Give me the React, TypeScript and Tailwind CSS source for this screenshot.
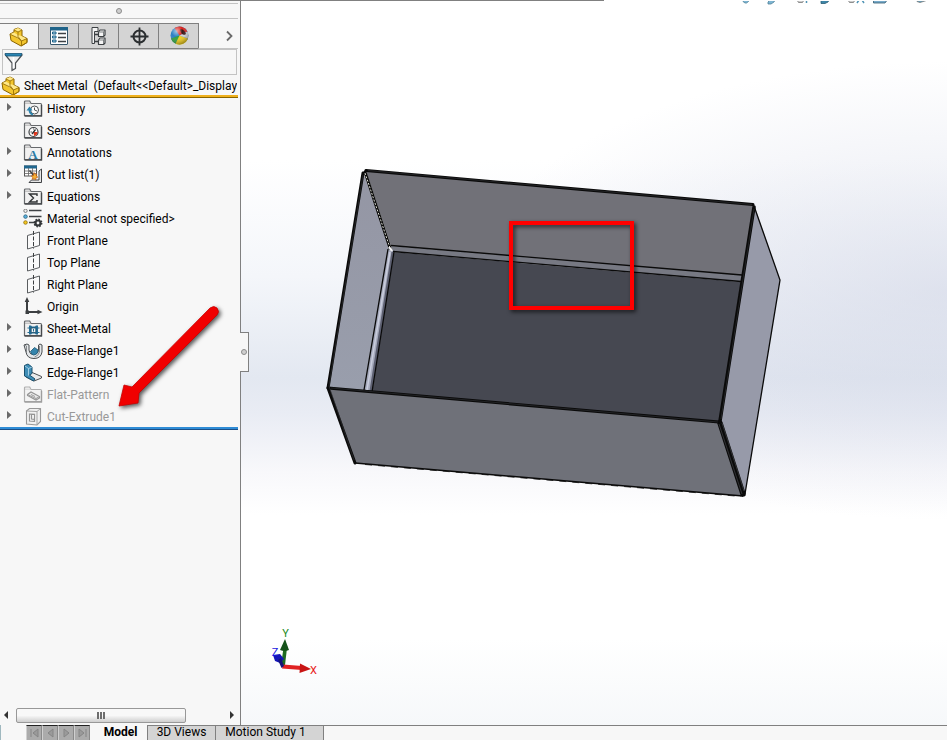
import type { ReactNode } from "react";

function Icon({ children, faded = false }: { children: ReactNode; faded?: boolean }) {
  return (
    <svg viewBox="0 0 20 20" className={faded ? "size-5 shrink-0 opacity-50 grayscale" : "size-5 shrink-0"} aria-hidden="true">
      {children}
    </svg>
  );
}

function Folder() {
  return (
    <>
      <path d="M1.500 16.500V3q0-1 1-1h4.200L8 4.500h9.500q1 0 1 1v11z" fill="#f1f1f1" stroke="#66696c" strokeWidth="1.200" />
      <path d="M2 4.200h5.500" stroke="#b0b0b0" />
      <path d="M1.500 17h17V6" fill="none" stroke="#45484b" strokeWidth="1.300" />
    </>
  );
}

function PartIcon() {
  return (
    <Icon>
      <path d="M1 7l4-2V2.500L9 1l4 2v6l5 2.500v4L12 19 2 13.500z" fill="#f3c62e" stroke="#8a6300" strokeWidth="1" strokeLinejoin="round" />
      <path d="M5 2.800L9 1l4 2-4 2zM1.500 7l3.500-1.500 4 2.500 3.500 1 5 2.500-5 2.500z" fill="#ffe88a" />
      <path d="M5 3l4 2v4.500l3.500 4.500V19L18 15.500v-4l-5.500 2.500M9 5l4-2M1.500 7.500L9 11l3.500 3" fill="none" stroke="#9b7206" strokeWidth=".9" />
    </Icon>
  );
}

function HistoryIcon() {
  return (
    <Icon>
      <Folder />
      <circle cx="11.500" cy="11" r="4" fill="#fff" stroke="#4c5053" />
      <path d="M11.500 8.500V11l2.500 1" fill="none" stroke="#4c5053" />
      <path d="M10 15.500A4.500 4.500 0 0 1 6.500 11" fill="none" stroke="#2a82ad" strokeWidth="1.800" />
      <path d="M3.500 11.500L6.500 7.500l3 4z" fill="#2a82ad" />
    </Icon>
  );
}

function SensorsIcon() {
  return (
    <Icon>
      <Folder />
      <circle cx="10.500" cy="11" r="4.500" fill="#fff" stroke="#3d4144" strokeWidth="1.200" />
      <path d="M10.500 11l4 0a4 4 0 0 1-3.500 4z" fill="#e0361c" />
      <path d="M9 13l3.500-4.500" stroke="#2b2f32" strokeWidth="1.300" />
      <path d="M7.500 11h1.500M10.500 7.500v1" stroke="#555" />
    </Icon>
  );
}

function AnnotationsIcon() {
  return (
    <Icon>
      <Folder />
      <text x="10" y="15.500" textAnchor="middle" fontFamily="Liberation Serif, serif" fontWeight="bold" fontSize="13" fill="#2a7ba6">A</text>
    </Icon>
  );
}

function EquationsIcon() {
  return (
    <Icon>
      <Folder />
      <path d="M14 9V7H6.500l4 4-4 4H14v-2" fill="none" stroke="#303335" strokeWidth="1.400" />
    </Icon>
  );
}

function CutListIcon() {
  return (
    <Icon>
      <rect x="1.500" y="1" width="12" height="10" fill="#fff" stroke="#555" />
      <rect x="1" y=".5" width="13" height="3" fill="#20678f" />
      <path d="M1.500 6h12M1.500 8.500h12M5.500 3v8M9.500 3v8" stroke="#666" strokeWidth=".8" />
      <path d="M6 17.500l2.500-2.500H16V6l2.500-2v13.500z" fill="#e6e6e6" stroke="#404346" />
      <path d="M6.500 5.500l6 7" stroke="#444" strokeWidth="1.500" />
      <path d="M11 7.500l.8 1.700 2-.2-.6 1.900 1.600 1.200-1.900.8-.1 2-1.700-1.200-1.900.6.5-1.900-1.300-1.600 2-.3z" fill="#f9b233" stroke="#c05a10" strokeWidth=".7" />
    </Icon>
  );
}

function MaterialIcon() {
  return (
    <Icon>
      <path d="M6 1.500h12.500M6 7.500h12.500M6 13.500h6" stroke="#3e4245" strokeWidth="1.500" />
      <circle cx="2.500" cy="1.800" r="1.700" fill="#eee" stroke="#666" strokeWidth=".8" />
      <circle cx="2.500" cy="7.600" r="1.800" fill="#56b0dd" stroke="#32637c" strokeWidth=".8" />
      <circle cx="2.500" cy="13.500" r="1.800" fill="#f3c51f" stroke="#8f7210" strokeWidth=".8" />
      <circle cx="15" cy="14" r="2.500" fill="none" stroke="#333639" strokeWidth="2.200" />
      <circle cx="15" cy="14" r="3.700" fill="none" stroke="#333639" strokeWidth="1.500" strokeDasharray="1.500 1.400" />
    </Icon>
  );
}

function PlaneIcon() {
  return (
    <Icon>
      <path d="M4.500 4.500L16.500 1v13.500L4.500 18z" fill="#fafafa" stroke="#5a5d60" />
      <path d="M10.500 0v17.500" stroke="#3d4042" strokeDasharray="4 1.500" />
    </Icon>
  );
}

function OriginIcon() {
  return (
    <Icon>
      <path d="M4 3v12h12" fill="none" stroke="#3c3f41" strokeWidth="2" />
      <path d="M4 0l2.300 5H1.700zM19.500 15l-5-2.300v4.600zM2.500 13.500h3.500v3.500H2.500z" fill="#3c3f41" />
    </Icon>
  );
}

function SheetMetalIcon() {
  return (
    <Icon>
      <Folder />
      <path d="M6 6.500h2l1 1h3l1-1h2v9h-2l-1-1H9l-1 1H6z" fill="#246c93" />
      <path d="M8.200 9h4.600v4.500H8.200z" fill="#f3f3f3" stroke="#174e6d" strokeWidth=".8" />
      <path d="M10.500 10v2.500M4.500 9h2M4.500 13.500h2M14.500 9h2M14.500 13.500h2" stroke="#246c93" />
    </Icon>
  );
}

function BaseFlangeIcon() {
  return (
    <Icon>
      <path d="M1 4l3-1 2 1v5q.5 3 2 4l5 0q2-1 2.500-3.500V4L17 3l2 1v7q-1 6.500-8 6.500Q4 17.500 3 11z" fill="#e4e7e9" stroke="#4b4f52" />
      <path d="M7.500 10.500l4-4 3.500 2.500q0 4.500-4.500 5Q8 13.500 7.500 10.500z" fill="#3585ad" stroke="#1d5571" strokeWidth=".8" />
      <path d="M1 4l2.500 1v6M16.500 5v6q-1 4-5 5" fill="none" stroke="#73777a" strokeWidth=".8" />
    </Icon>
  );
}

function EdgeFlangeIcon() {
  return (
    <Icon>
      <path d="M8 9l10.500 4.500v1.500l-7.500 3L3 14z" fill="#e9eaeb" stroke="#4b4f52" />
      <path d="M1.500 2.500L5 1l4 3v6.500L6.500 12l5.500 4-1.500 2L1.500 13z" fill="#3f8eb7" stroke="#1a506d" />
      <path d="M2 3l3.500 2.500L9 4M5.500 5.500v7" fill="none" stroke="#b7dcef" strokeWidth=".8" />
    </Icon>
  );
}

function FlatPatternIcon() {
  return (
    <Icon faded>
      <Folder />
      <path d="M4.500 9.500L8 7l8.500 4.500v1.500L13 15l-8.500-4.500z" fill="#ddd" stroke="#333" strokeWidth="1.200" />
      <path d="M4.500 9.500L13 13.500l3.500-2M13 13.500V15M8 9.500l4 2" fill="none" stroke="#444" />
    </Icon>
  );
}

function CutExtrudeIcon() {
  return (
    <Icon faded>
      <path d="M3.500 4l3-2.500h11v13l-3.500 3.500-10.500-1z" fill="#ededed" stroke="#3a3a3a" strokeWidth="1.100" />
      <path d="M3.500 4l10.500.5V18M14 4.500l3.500-3" fill="none" stroke="#555" />
      <path d="M6.500 7l5 .3v7l-5-.3zM8.500 7.500v4.500l3 .5" fill="#fff" stroke="#333" strokeWidth="1.200" />
    </Icon>
  );
}

const features: { label: string; icon: ReactNode; expandable?: boolean; suppressed?: boolean }[] = [
  { label: "History", icon: <HistoryIcon />, expandable: true },
  { label: "Sensors", icon: <SensorsIcon /> },
  { label: "Annotations", icon: <AnnotationsIcon />, expandable: true },
  { label: "Cut list(1)", icon: <CutListIcon />, expandable: true },
  { label: "Equations", icon: <EquationsIcon />, expandable: true },
  { label: "Material <not specified>", icon: <MaterialIcon /> },
  { label: "Front Plane", icon: <PlaneIcon /> },
  { label: "Top Plane", icon: <PlaneIcon /> },
  { label: "Right Plane", icon: <PlaneIcon /> },
  { label: "Origin", icon: <OriginIcon /> },
  { label: "Sheet-Metal", icon: <SheetMetalIcon />, expandable: true },
  { label: "Base-Flange1", icon: <BaseFlangeIcon />, expandable: true },
  { label: "Edge-Flange1", icon: <EdgeFlangeIcon />, expandable: true },
  { label: "Flat-Pattern", icon: <FlatPatternIcon />, expandable: true, suppressed: true },
  { label: "Cut-Extrude1", icon: <CutExtrudeIcon />, expandable: true, suppressed: true },
];

const managerTabs: { label: string; icon: ReactNode }[] = [
  {
    label: "PropertyManager",
    icon: (
      <Icon>
        <rect x="1.500" y="1.500" width="17" height="17" rx=".5" fill="#fff" stroke="#35566b" />
        <rect x="1" y="1" width="18" height="3.500" fill="#1f6389" />
        <path d="M3.500 6h3.500v2H3.500zM3.500 10h3.500v2H3.500zM3.500 14h3.500v2H3.500z" fill="#9cc9e2" stroke="#1f6389" />
        <path d="M9 7.500h8M9 11.500h8M9 15.500h8" stroke="#3e4245" strokeWidth="1.300" />
      </Icon>
    ),
  },
  {
    label: "ConfigurationManager",
    icon: (
      <Icon>
        <path d="M4.500 4v14M5 8.500h5M5 15.500h5" stroke="#3d4144" fill="none" strokeWidth="1.300" />
        <path d="M3 1.500h6v4H5.500v12H3z" fill="#f4f4f4" stroke="#3d4144" />
        <path d="M9.500 6l1.500-2h5v5l-1.500 1.500h-5zM9.500 14l1.500-2h5v5l-1.500 1.500h-5z" fill="#f4f4f4" stroke="#3d4144" strokeWidth="1.200" strokeLinejoin="round" />
        <path d="M9.500 6h5v4M14.500 6l1.500-2M9.500 14h5v4M14.500 14l1.500-2" fill="none" stroke="#606467" strokeWidth=".8" />
      </Icon>
    ),
  },
  {
    label: "DimXpertManager",
    icon: (
      <Icon>
        <circle cx="10.500" cy="10.500" r="6" fill="none" stroke="#2b2e30" strokeWidth="2" />
        <path d="M10.500 1.500v18M1.500 10.500h18" stroke="#2b2e30" strokeWidth="1.800" />
      </Icon>
    ),
  },
  {
    label: "DisplayManager",
    icon: (
      <Icon>
        <defs>
          <radialGradient id="shine" cx=".35" cy=".25" r=".8">
            <stop offset="0" stopColor="#fff" stopOpacity=".6" />
            <stop offset=".4" stopColor="#fff" stopOpacity="0" />
            <stop offset="1" stopColor="#000" stopOpacity=".4" />
          </radialGradient>
        </defs>
        <circle cx="10.500" cy="9.500" r="9" fill="#2c7fc4" />
        <path d="M10.500 9.500L5.500 2A9 9 0 0 1 18.500 5.500z" fill="#d8241e" />
        <path d="M10.500 9.500L2 12.500A9 9 0 0 0 8.500 18.300z" fill="#2f9e3f" />
        <path d="M10.500 9.500l-4 8.200A9 9 0 0 0 19 12.500z" fill="#f1cd1b" />
        <path d="M10.500 9.500l8.500 3a9 9 0 0 0-.5-7z" fill="#d2d5d8" />
        <path d="M11 3.500q4-1 6 4.500-4 3-6-4.500z" fill="#3b1a18" />
        <circle cx="10.500" cy="9.500" r="9" fill="url(#shine)" />
      </Icon>
    ),
  },
];

function Knob() {
  return <span className="block size-[6px] rounded-full border border-[#8c8c8c] bg-[#cfcfcf]" />;
}

function FeatureManager() {
  return (
    <aside className="flex w-[241px] shrink-0 flex-col border-r border-[#808080] bg-[#f7f7f7] pr-[2px]">
      <div className="mt-[2px] flex h-4 items-center justify-center border-y border-[#c3c3c3]">
        <Knob />
      </div>

      <div role="tablist" aria-label="Managers" className="mt-1 flex h-[26px]">
        <button role="tab" aria-selected="true" aria-label="FeatureManager" className="flex w-[38px] items-center justify-center border-t border-[#808080]">
          <PartIcon />
        </button>
        {managerTabs.map((tab) => (
          <button
            key={tab.label}
            role="tab"
            aria-selected="false"
            aria-label={tab.label}
            className="flex w-10 items-center justify-center border-y border-l border-[#808080] bg-[#d4d4d4]"
          >
            {tab.icon}
          </button>
        ))}
        <div className="flex flex-1 items-center justify-end border-b border-l border-b-[#c3c3c3] border-l-[#808080] pr-1">
          <button aria-label="More tabs" className="text-[#6a6a6a]">
            <svg viewBox="0 0 10 12" className="h-3 w-[10px]">
              <path d="M3 1.500L7.500 6 3 10.500" fill="none" stroke="currentColor" strokeWidth="1.800" />
            </svg>
          </button>
        </div>
      </div>

      <label className="mr-px ml-[2px] flex h-[26px] items-center border border-[#c3c3c3] pl-[1px]">
        <svg viewBox="0 0 20 20" className="size-5" aria-hidden="true">
          <path d="M1.500 3L8 11v7.500l3.500-2V11L18 3z" fill="#eceeef" stroke="#4b4f52" strokeWidth="1.200" />
          <path d="M1 1.500h17l-1 2.500H2z" fill="#2a86b4" stroke="#155376" strokeWidth=".8" />
          <path d="M9.500 5v11" stroke="#fff" strokeWidth="1.500" />
        </svg>
        <input type="text" aria-label="Filter" className="min-w-0 flex-1 bg-transparent px-1 outline-none" />
      </label>

      <div className="mt-[2px] flex h-[18px] items-center gap-[3px] pl-[1px]">
        <PartIcon />
        <span className="min-w-0 overflow-hidden whitespace-pre">Sheet Metal  (Default&lt;&lt;Default&gt;_Display</span>
      </div>
      <div className="h-[3px] border-b border-[#8a6500] bg-[#efb01c]" />

      <ul className="border-b border-[#1c4f86]">
        {features.map((f) => (
          <li key={f.label} className={f.suppressed ? "flex h-[22px] items-center text-[#999]" : "flex h-[22px] items-center"}>
            <span className="w-[23px] shrink-0 pl-[7px]">
              {f.expandable && (
                <button aria-label={`Expand ${f.label}`} className="block">
                  <svg viewBox="0 0 5 8" className="mb-1 h-2 w-[5px]">
                    <path d="M0 0l4.500 4L0 8z" fill="#6a6a6a" />
                  </svg>
                </button>
              )}
            </span>
            {f.icon}
            <span className="ml-1">{f.label}</span>
          </li>
        ))}
        <li aria-hidden="true" className="-mt-[1px] h-[2px] bg-[#2f8cd6]" />
      </ul>

      <div className="mt-auto mb-[2px] flex h-4 items-center">
        <button aria-label="Scroll left" className="flex w-4 justify-center pr-1">
          <svg viewBox="0 0 4 8" className="h-2 w-1"><path d="M4 0L0 4l4 4z" fill="#333" /></svg>
        </button>
        <button aria-label="Scroll position" className="flex h-[15px] w-[170px] items-center justify-center gap-[1px] rounded-xs border border-[#989898] bg-linear-to-b from-[#f8f8f8] from-50% to-[#cfcfcf]">
          <span className="h-[7px] w-[2px] bg-[#6d6d6d]" />
          <span className="h-[7px] w-[2px] bg-[#6d6d6d]" />
          <span className="h-[7px] w-[2px] bg-[#6d6d6d]" />
        </button>
        <button aria-label="Scroll right" className="ml-auto flex w-3 justify-center">
          <svg viewBox="0 0 4 8" className="h-2 w-1"><path d="M0 0l4 4-4 4z" fill="#333" /></svg>
        </button>
      </div>
    </aside>
  );
}

function Triad() {
  return (
    <g fontFamily="Roboto, sans-serif" fontSize="11">
      <path d="M281 665l2.500-17h3.500l-2 17z" fill="#1e6b22" />
      <path d="M285 639l-5 11q4.500 2 9 0z" fill="#15521a" />
      <path d="M283 664.500l19 1.500v4l-20-1.500z" fill="#e02222" />
      <path d="M300 663.500l11 5.500-11.500 4z" fill="#c81414" />
      <path d="M273 655l7-1 4 5-4 4-5-2z" fill="#1414b8" />
      <path d="M278 660l3-2 3 8-2.500 2z" fill="#14147a" />
      <text x="285.500" y="637" textAnchor="middle" fill="#1b8a1b">Y</text>
      <text x="275" y="656" textAnchor="middle" fill="#1818e0">Z</text>
      <text x="313.500" y="674" textAnchor="middle" fill="#e81818">X</text>
    </g>
  );
}

function Model() {
  return (
    <svg viewBox="241 1 706 724" className="block size-full" role="img" aria-label="Sheet metal tray">
      <defs>
        <linearGradient id="side" x1="0" y1="0" x2="0" y2="1">
          <stop offset="0" stopColor="#9496a4" />
          <stop offset="1" stopColor="#999eac" />
        </linearGradient>
      </defs>

      <g strokeWidth=".8">
        <path d="M743 0h5.500v1.500l-2 1.500h-1.500l-2-1.500zM768 4V2l2-2h5l-1 2-3 2z" fill="#7fb6d3" stroke="#4f8199" />
        <path d="M797 0h7l-1.500 2.500h-4z" fill="#ccc" stroke="#777" />
        <path d="M821 0h8l-1 2-3 1.500h-4z" fill="#3f86a8" stroke="#2b5d75" />
        <path d="M848 0h7l-1.500 2.500h-4z" fill="#ccc" stroke="#777" />
        <path d="M806.500 0v3M857 3l2-3M864 3l-2-3" fill="none" stroke="#4f93b5" strokeWidth="1.500" />
        <path d="M873.500 0h13v1l-1.500 2h-11.500z" fill="#78abcb" stroke="#345b70" />
        <path d="M917 0h11l-8 2.500-3-1z" fill="#6aa3bf" stroke="#777" />
      </g>

      <path d="M366 171L754 205 742 276 391 246z" fill="#717178" />
      <path d="M391 246L742 275 741 282 393 252z" fill="#777983" />
      <path d="M393 252L741 282 719 422 372 392z" fill="#464851" />
      <path d="M363 172L391 248 366 391 328 388z" fill="url(#side)" />
      <path d="M389 248L394 252 372 392 365 391z" fill="#a7abbd" />
      <path d="M393 252L371 391" stroke="#5c5f70" strokeWidth="3" />
      <path d="M754 205L780 280 745 494 720 422z" fill="#979aa9" />
      <path d="M328 388L719 422 743 496 355 463z" fill="#6f7179" />

      <g fill="none" stroke="#0a0a0a" strokeWidth="1.300">
        <path d="M391 245.500L742 275M393 251.500L741 281.500M388 249L364 390M394 252L372 392" />
        <path d="M754 206L780 280 745 494" />
        <path d="M355 463L743 496" strokeWidth="1.500" />
        <path d="M365 464.500L741 496.500" strokeDasharray="7 6" strokeWidth=".8" />
      </g>
      <g fill="none" stroke="#0a0a0a" strokeLinejoin="round" strokeLinecap="round">
        <path d="M366 170.500L753 204.500" strokeWidth="3" />
        <path d="M363 173L328 388 355 463" strokeWidth="3" />
        <path d="M328 388L719 422" strokeWidth="3" />
        <path d="M754 207L720 421" strokeWidth="3.500" />
        <path d="M720 423L743 494" strokeWidth="5.500" />
        <path d="M365 172L390 248" strokeWidth="3" />
      </g>
      <g fill="none" strokeWidth=".6">
        <path d="M368 170.500L752 204.500M363 175L329 386 354 460M331 388L718 422M754 209L721 419" stroke="#333437" />
        <path d="M719 424L742 494M722 423L744 491" stroke="#4a4c51" />
        <path d="M365 173L390 248" stroke="#d8d9d0" strokeWidth="1" strokeDasharray="2 1.500" />
        <path d="M389 247L392 251" stroke="#f4f4f4" strokeWidth="2" />
        <path d="M390 252L367 390" stroke="#c9cddd" strokeWidth="1.500" />
      </g>
      <Triad />
    </svg>
  );
}

/* Red call-outs drawn above the window: a frame on the bend and an arrow to Cut-Extrude1. */
function Markup() {
  return (
    <svg viewBox="0 0 947 740" className="pointer-events-none absolute top-0 left-0 h-[740px] w-[947px]" aria-hidden="true">
      <g className="drop-shadow-[2px_2px_2px_rgba(0,0,0,0.65)]">
        <rect x="511" y="223" width="121" height="85" fill="none" stroke="#f00" strokeWidth="4" />
        <path d="M210 308q4-3 7 0 3 4 0 7l-78 78 -1 10-19 3 5-21 8 2z" fill="#f00000" stroke="#c80000" strokeWidth=".8" strokeLinejoin="round" />
      </g>
    </svg>
  );
}

const seekButtons = [
  { label: "First", d: "M3 2v8M10 2L5 6l5 4z" },
  { label: "Previous", d: "M9 2L4 6l5 4z" },
  { label: "Next", d: "M4 2l5 4-5 4z" },
  { label: "Last", d: "M10 2v8M3 2l5 4-5 4z" },
];

function BottomTabs() {
  return (
    <footer className="flex h-[15px] shrink-0 items-start overflow-hidden bg-[#f7f7f7]">
      <div className="flex h-4 w-[91px] border-l border-[#9fb8bf] pl-[25px]">
        {seekButtons.map((b) => (
          <button key={b.label} aria-label={b.label} className="flex h-4 w-4 items-center justify-center border border-t-[#222] border-r-[#8a8a8a] border-b-[#8a8a8a] border-l-[#d0d0d0] bg-[#ababab]">
            <svg viewBox="0 0 12 12" className="size-3">
              <path d={b.d} fill="#9a9a9a" stroke="#858585" />
            </svg>
          </button>
        ))}
      </div>
      <div role="tablist" aria-label="Views" className="flex">
        <button role="tab" aria-selected="true" className="flex h-4 w-[57px] justify-center border-r border-[#808080] pl-[3px] leading-[14px] font-bold">Model</button>
        <button role="tab" aria-selected="false" className="flex h-4 w-[68px] justify-center border-t border-r border-[#808080] bg-[#d4d4d4] leading-3">3D Views</button>
        <button role="tab" aria-selected="false" className="flex h-4 w-27 justify-center border-t border-r border-[#808080] bg-[#d4d4d4] pr-2 leading-3 whitespace-nowrap">Motion Study 1</button>
      </div>
      <div className="h-4 flex-1 border-t border-[#808080]" />
    </footer>
  );
}

export default function App() {
  return (
    <div className="relative flex h-screen flex-col overflow-hidden bg-white font-['Roboto','Liberation_Sans',sans-serif] text-[12px] leading-4 text-black">
      <div className="h-px w-[604px] shrink-0 bg-[#808080]" />
      <div className="flex min-h-0 flex-1">
        <FeatureManager />
        <main className="relative min-w-0 flex-1 bg-[radial-gradient(ellipse_480px_230px_at_100%_290px,rgba(206,211,228,0.55),rgba(206,211,228,0)),linear-gradient(to_bottom,#fff_0%,#fff_22%,#f4f6fa_38%,#e3e8f1_52%,#e9ecf4_57%,#f8f8fb_65%,#fff_71%,#fff_88%,#f6f8fa_100%)]">
          <button aria-label="Collapse panel" className="absolute top-[331px] -left-[1px] flex h-10 w-[9px] items-center border border-l-0 border-[#808080] bg-[#f7f7f7] pl-[1px]">
            <Knob />
          </button>
          <Model />
        </main>
      </div>
      <BottomTabs />
      <Markup />
    </div>
  );
}
